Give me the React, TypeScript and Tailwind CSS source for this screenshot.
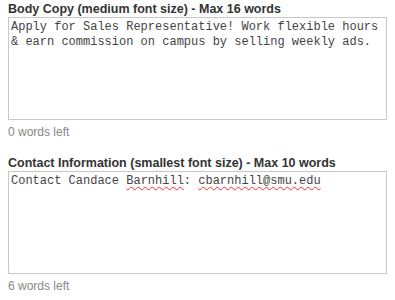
export default function App() {
  return (
    <div className="w-[395px] h-[300px] bg-white px-2 pt-[2px] font-['Liberation_Sans',Arial,sans-serif]">
      <Field
        label="Body Copy (medium font size) - Max 16 words"
        height="h-[103px]"
        left="0 words left"
      >
        Apply for Sales Representative! Work flexible hours
        <br />& earn commission on campus by selling weekly ads.
      </Field>
      <div className="h-[16px]" />
      <Field
        label="Contact Information (smallest font size) - Max 10 words"
        height="h-[103px]"
        left="6 words left"
      >
        Contact Candace{' '}
        <span className="underline decoration-wavy decoration-red-500 decoration-1 underline-offset-2">Barnhill</span>:{' '}
        <span className="underline decoration-wavy decoration-red-500 decoration-1 underline-offset-2">cbarnhill@smu.edu</span>
      </Field>
    </div>
  );
}

function Field({
  label,
  height,
  left,
  children,
}: {
  label: string;
  height: string;
  left: string;
  children: React.ReactNode;
}) {
  return (
    <div>
      <div className="text-[12.5px] leading-[15px] font-bold text-[#333]">{label}</div>
      <div
        className={`${height} w-[379px] border border-[#c8c8c8] px-[2px] pt-[2px] font-['Liberation_Mono',monospace] text-[12px] leading-[15px] text-[#444] whitespace-nowrap`}
      >
        {children}
      </div>
      <div className="mt-[5px] text-[12px] leading-[15px] text-[#888]">{left}</div>
    </div>
  );
}
